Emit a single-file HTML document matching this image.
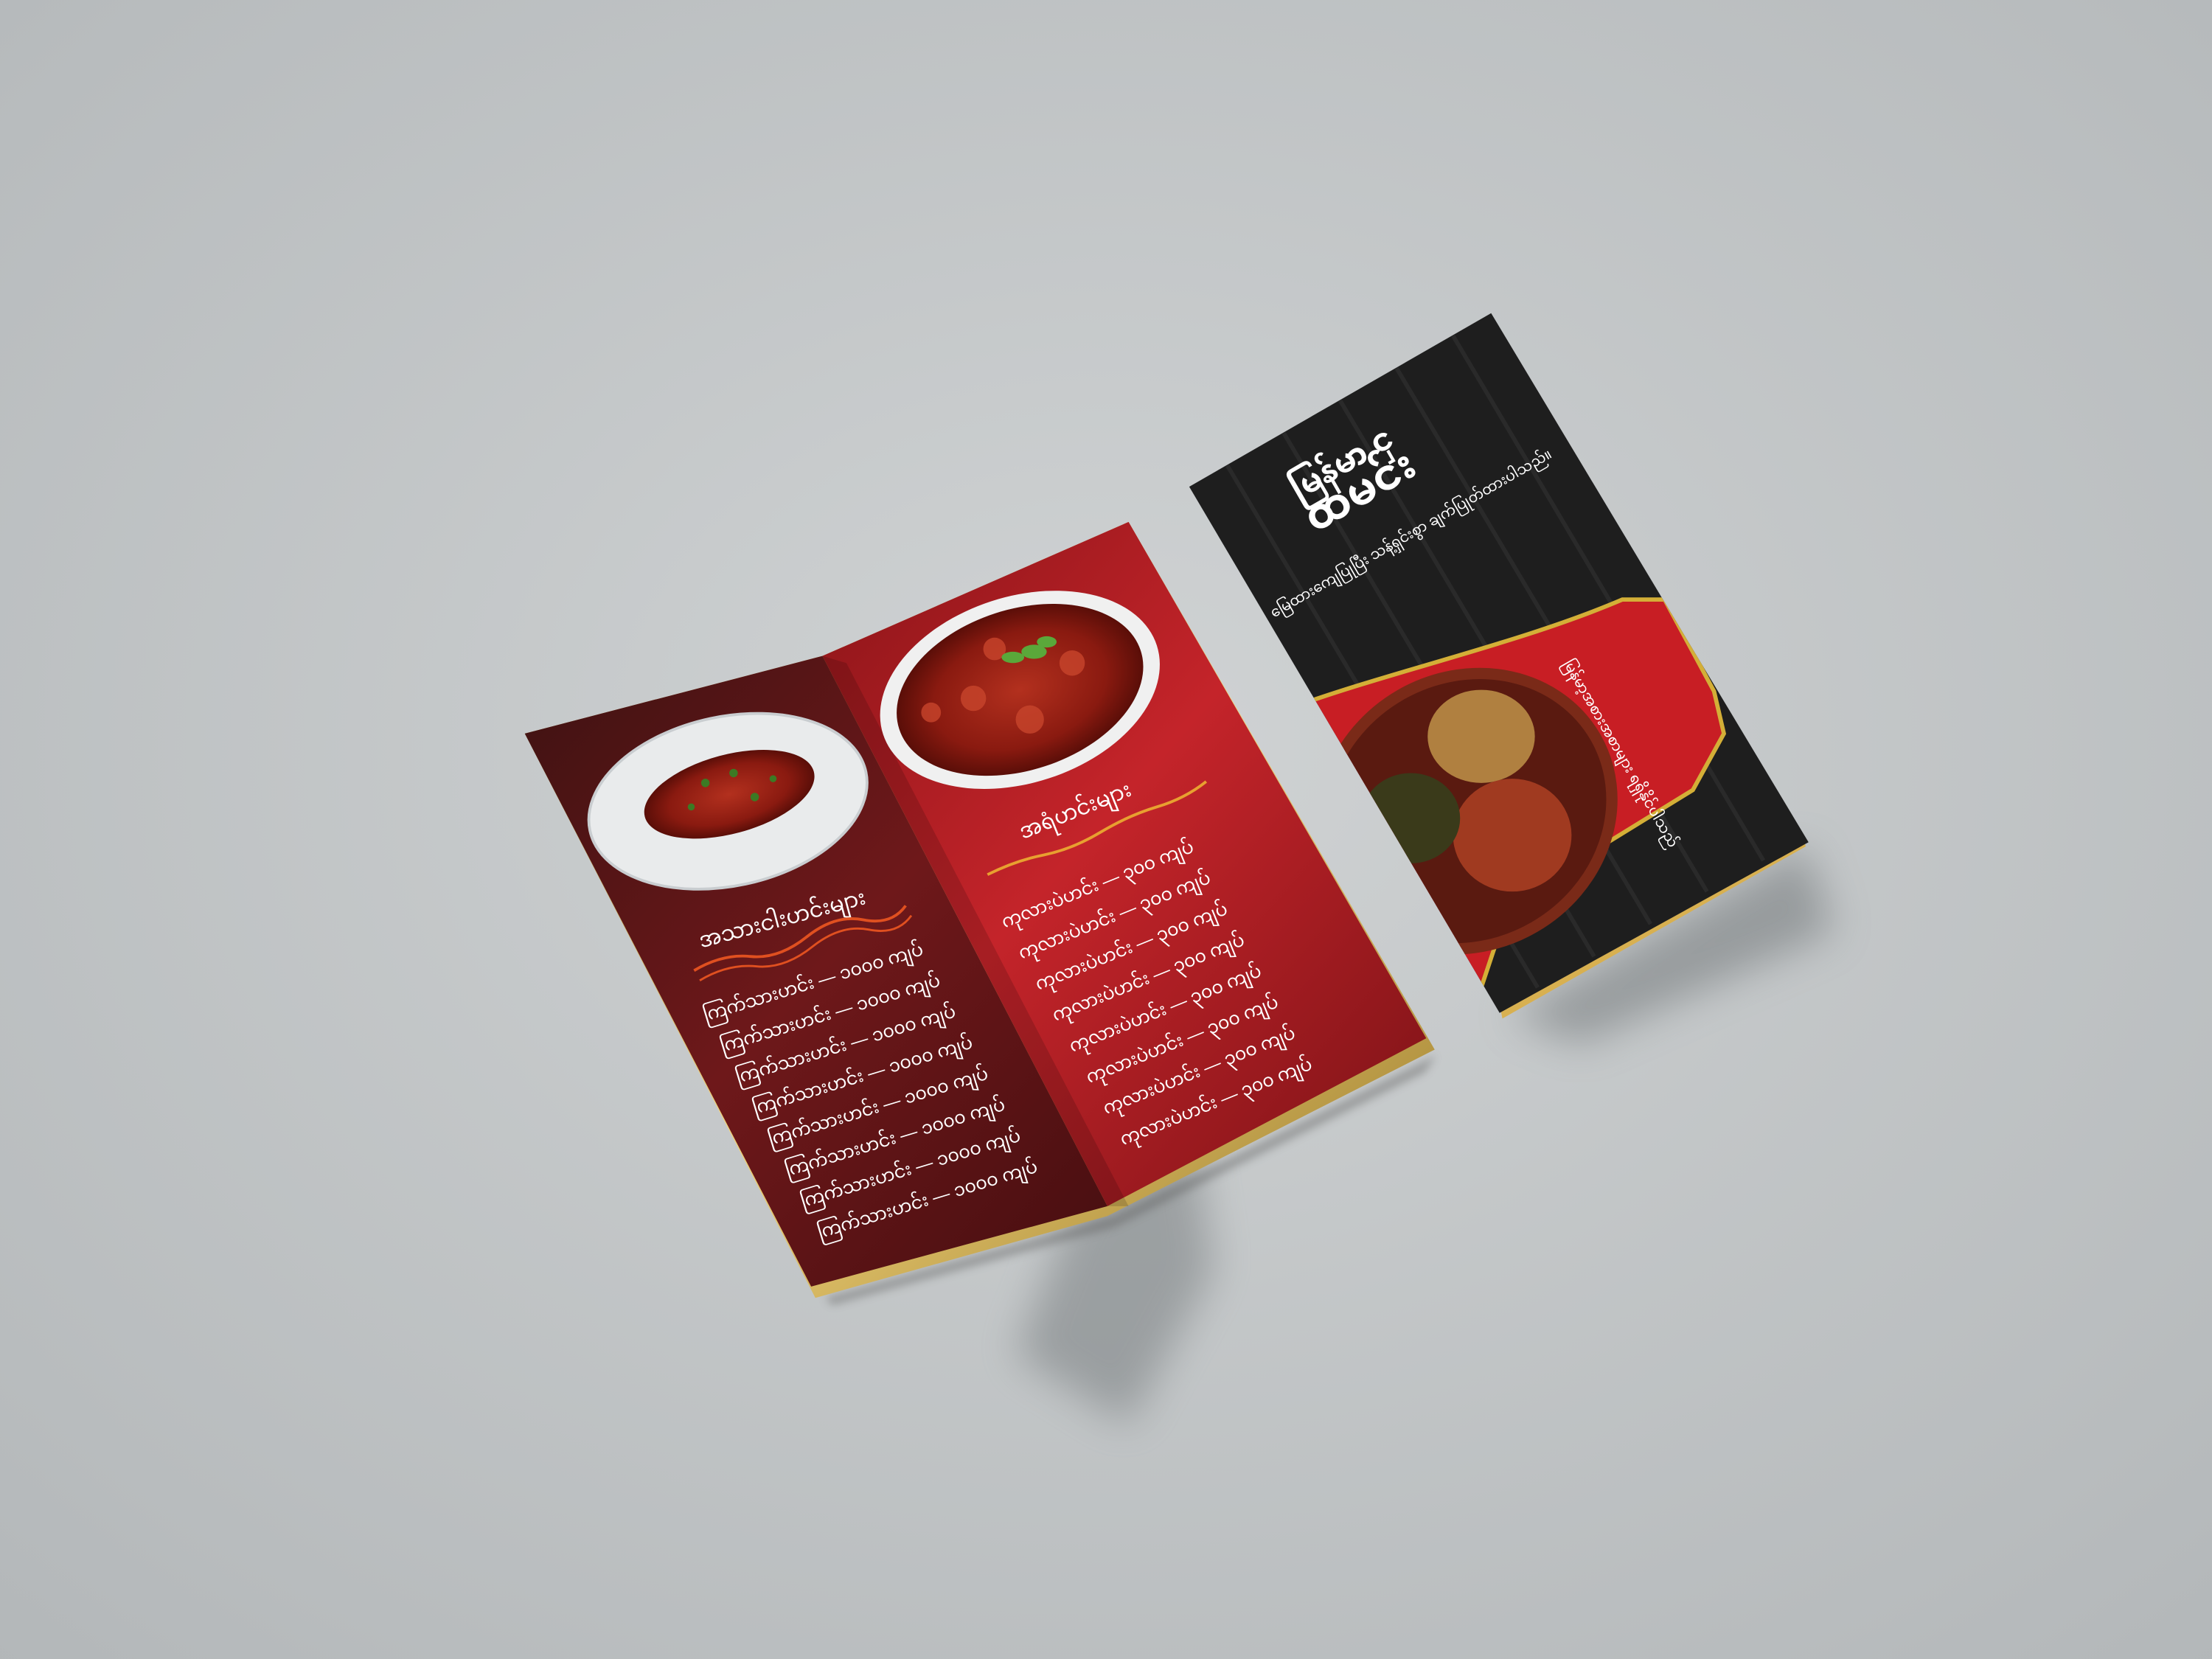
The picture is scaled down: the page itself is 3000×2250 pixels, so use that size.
<!DOCTYPE html>
<html><head><meta charset="utf-8"><style>
html,body{margin:0;padding:0;width:3000px;height:2250px;overflow:hidden;background:#c2c5c7}
svg{display:block}
text{font-family:"Liberation Sans","Noto Sans Myanmar","Padauk",sans-serif}
</style></head><body>
<svg width="3000" height="2250" viewBox="0 0 1568 1176" xmlns="http://www.w3.org/2000/svg">
<defs>
<radialGradient id="bg" cx="0.5" cy="0.45" r="0.75">
<stop offset="0" stop-color="#d0d3d4"/><stop offset="1" stop-color="#b3b7b9"/></radialGradient>
<linearGradient id="lp" x1="0" y1="0" x2="1" y2="1">
<stop offset="0" stop-color="#3e1212"/><stop offset="0.5" stop-color="#6e181a"/><stop offset="1" stop-color="#460e10"/></linearGradient>
<linearGradient id="rp" x1="0" y1="0" x2="1" y2="1">
<stop offset="0" stop-color="#8a1418"/><stop offset="0.45" stop-color="#c4242a"/><stop offset="1" stop-color="#7a1216"/></linearGradient>
<linearGradient id="gold" x1="0" y1="0" x2="1" y2="1">
<stop offset="0" stop-color="#8a6a1e"/><stop offset="0.5" stop-color="#f1d37a"/><stop offset="1" stop-color="#9a7a2a"/></linearGradient>
<filter id="bl" x="-50%" y="-50%" width="200%" height="200%"><feGaussianBlur stdDeviation="14"/></filter>
<filter id="bl2"><feGaussianBlur stdDeviation="3"/></filter>
<radialGradient id="food" cx="0.5" cy="0.5" r="0.5">
<stop offset="0" stop-color="#b3301e"/><stop offset="0.7" stop-color="#8a1a10"/><stop offset="1" stop-color="#5a0e08"/></radialGradient>
<clipPath id="bk"><polygon points="843,345 1057,222 1282,597 1063,718"/></clipPath>
</defs>
<rect width="1568" height="1176" fill="url(#bg)"/>
<polygon points="760,860 840,760 860,900 800,1010 720,960" fill="#6b6f72" opacity="0.45" filter="url(#bl)"/>
<polygon points="1070,720 1280,600 1300,660 1120,740" fill="#6b6f72" opacity="0.5" filter="url(#bl)"/>
<polygon points="585,920 790,862 1018,748 1010,760 790,870 590,925" fill="#555" opacity="0.4" filter="url(#bl2)"/>
<polygon points="372,520 583,465 800,370 1017,744 785,862 578,920" fill="url(#gold)"/>
<polygon points="372,520 583,465 785,855 575,912" fill="url(#lp)"/>
<polygon points="583,465 800,370 1011,736 785,855" fill="url(#rp)"/>
<polygon points="583,465 600,470 800,855 785,855" fill="#000" opacity="0.15"/>
<ellipse cx="516" cy="568" rx="100" ry="60" transform="rotate(-12 516 568)" fill="#e9ebec"/>
<ellipse cx="516" cy="568" rx="100" ry="60" transform="rotate(-12 516 568)" fill="none" stroke="#c9cdd0" stroke-width="2"/>
<ellipse cx="517" cy="563" rx="62" ry="28" transform="rotate(-15 517 563)" fill="url(#food)"/>
<g fill="#3c7a24"><circle cx="500" cy="555" r="3"/><circle cx="520" cy="548" r="3"/><circle cx="535" cy="565" r="3"/><circle cx="490" cy="572" r="2.5"/><circle cx="548" cy="552" r="2.5"/></g>
<ellipse cx="723" cy="489" rx="102" ry="66" transform="rotate(-18 723 489)" fill="#f0f0f0"/>
<ellipse cx="723" cy="489" rx="90" ry="57" transform="rotate(-18 723 489)" fill="url(#food)"/>
<g fill="#c8452c" opacity="0.8"><circle cx="690" cy="495" r="9"/><circle cx="730" cy="510" r="10"/><circle cx="760" cy="470" r="9"/><circle cx="705" cy="460" r="8"/><circle cx="660" cy="505" r="7"/></g>
<g fill="#5aa83a"><ellipse cx="733" cy="462" rx="9" ry="5"/><ellipse cx="718" cy="466" rx="8" ry="4"/><ellipse cx="742" cy="455" rx="7" ry="4"/></g>
<g fill="#fff" font-size="14">
<text transform="translate(497,672) rotate(-15)" font-size="15">အသားငါးဟင်းများ</text>
<path d="M492,688 q20,-12 40,-10 t40,-14 t40,-12 t30,-10" stroke="#e05020" stroke-width="2" fill="none"/>
<path d="M496,695 q20,-12 40,-10 t40,-14 t40,-12 t30,-10" stroke="#e05020" stroke-width="1.5" fill="none"/>
<g font-size="12.5">
<text transform="translate(500,724) rotate(-17)">ကြက်သားဟင်း   —    ၁၀၀၀ ကျပ်</text>
<text transform="translate(512,746) rotate(-17)">ကြက်သားဟင်း   —    ၁၀၀၀ ကျပ်</text>
<text transform="translate(523,768) rotate(-17)">ကြက်သားဟင်း   —    ၁၀၀၀ ကျပ်</text>
<text transform="translate(535,790) rotate(-17)">ကြက်သားဟင်း   —    ၁၀၀၀ ကျပ်</text>
<text transform="translate(546,812) rotate(-17)">ကြက်သားဟင်း   —    ၁၀၀၀ ကျပ်</text>
<text transform="translate(558,834) rotate(-17)">ကြက်သားဟင်း   —    ၁၀၀၀ ကျပ်</text>
<text transform="translate(569,856) rotate(-17)">ကြက်သားဟင်း   —    ၁၀၀၀ ကျပ်</text>
<text transform="translate(581,878) rotate(-17)">ကြက်သားဟင်း   —    ၁၀၀၀ ကျပ်</text>
</g>
<text transform="translate(725,595) rotate(-22)" font-size="15">အရံဟင်းများ</text>
<path d="M700,620 q20,-10 40,-14 t40,-16 t40,-18 t35,-18" stroke="#e8a030" stroke-width="2" fill="none"/>
<g font-size="12.5">
<text transform="translate(712,658) rotate(-22)">ကုလားပဲဟင်း   —    ၃၀၀ ကျပ်</text>
<text transform="translate(724,680) rotate(-22)">ကုလားပဲဟင်း   —    ၃၀၀ ကျပ်</text>
<text transform="translate(736,702) rotate(-22)">ကုလားပဲဟင်း   —    ၃၀၀ ကျပ်</text>
<text transform="translate(748,724) rotate(-22)">ကုလားပဲဟင်း   —    ၃၀၀ ကျပ်</text>
<text transform="translate(760,746) rotate(-22)">ကုလားပဲဟင်း   —    ၃၀၀ ကျပ်</text>
<text transform="translate(772,768) rotate(-22)">ကုလားပဲဟင်း   —    ၃၀၀ ကျပ်</text>
<text transform="translate(784,790) rotate(-22)">ကုလားပဲဟင်း   —    ၃၀၀ ကျပ်</text>
<text transform="translate(796,812) rotate(-22)">ကုလားပဲဟင်း   —    ၃၀၀ ကျပ်</text>
</g>
</g>
<polygon points="1065,722 1280,600 1278,592 1063,712" fill="#d8b050"/>
<polygon points="843,345 1057,222 1282,597 1063,718" fill="#1e1e1e"/>
<g clip-path="url(#bk)">
<g stroke="#2a2a2a" stroke-width="3">
<line x1="870" y1="330" x2="1090" y2="700"/><line x1="910" y1="307" x2="1130" y2="678"/><line x1="950" y1="284" x2="1170" y2="655"/><line x1="990" y1="261" x2="1210" y2="632"/><line x1="1030" y1="238" x2="1250" y2="610"/></g>
<path d="M920,500 C990,475 1080,455 1150,425 L1180,425 L1215,490 L1222,520 L1200,560 L1070,640 L1050,700 L1000,720 Z" fill="#c81e24" stroke="#d4af37" stroke-width="3"/>
<ellipse cx="1040" cy="575" rx="105" ry="95" transform="rotate(-30 1040 575)" fill="#5a1a10" stroke="#7a2a18" stroke-width="8"/>
<ellipse cx="1050" cy="522" rx="38" ry="33" fill="#b08040"/>
<ellipse cx="1072" cy="592" rx="42" ry="40" fill="#a03a20"/>
<ellipse cx="1000" cy="580" rx="35" ry="32" fill="#3a3a1a"/>
</g>
<g fill="#fff">
<text transform="translate(920,355) rotate(-30)" font-size="22" font-weight="bold">မြန်မာ ငှ</text>
<text transform="translate(932,378) rotate(-30)" font-size="30" font-weight="bold">ထမင်း</text>
<text transform="translate(903,438) rotate(-30)" font-size="10">မြေထားကျေပြုပြီး သန့်ရှင်းစွာ ချက်ပြုတ်ထားပါသည်။</text>
<text transform="translate(1108,470) rotate(60)" font-size="10">မြန်မာ့အစားအစာများ ရရှိနိုင်ပါသည်</text>
</g>
</svg>
</body></html>
